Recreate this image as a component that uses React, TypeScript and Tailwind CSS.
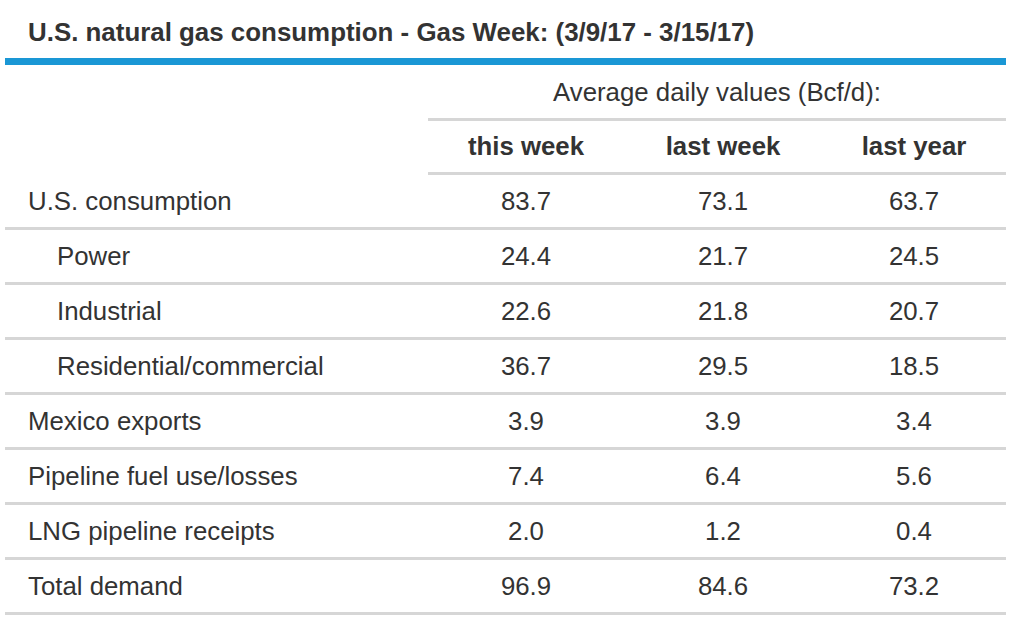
import React from 'react';

interface Row {
	label: string;
	indent?: boolean;
	values: [string, string, string];
}

const rows: Row[] = [
	{ label: 'U.S. consumption', values: ['83.7', '73.1', '63.7'] },
	{ label: 'Power', indent: true, values: ['24.4', '21.7', '24.5'] },
	{ label: 'Industrial', indent: true, values: ['22.6', '21.8', '20.7'] },
	{ label: 'Residential/commercial', indent: true, values: ['36.7', '29.5', '18.5'] },
	{ label: 'Mexico exports', values: ['3.9', '3.9', '3.4'] },
	{ label: 'Pipeline fuel use/losses', values: ['7.4', '6.4', '5.6'] },
	{ label: 'LNG pipeline receipts', values: ['2.0', '1.2', '0.4'] },
	{ label: 'Total demand', values: ['96.9', '84.6', '73.2'] }
];

const grid = 'grid grid-cols-[423px_196px_198px_184px]';

export default function App() {
	return (
		<div className="w-[1022px] h-[642px] bg-white text-[#333] font-['Liberation_Sans',Arial,sans-serif] text-[25.8px]">
			<div className="h-[58px] pl-[28px] pt-[17px] leading-[30px] font-bold text-[25.9px]">
				U.S. natural gas consumption - Gas Week: (3/9/17 - 3/15/17)
			</div>
			<div className="ml-[5px] w-[1001px] h-[7px] bg-[#1a97d5]" />

			<div className="ml-[5px] w-[1001px]">
				{/* header */}
				<div className={grid}>
					<div />
					<div className="col-span-3 h-[56px] flex items-center justify-center pt-[2px] border-b-[3px] border-[#d6d6d6]">
						Average daily values (Bcf/d):
					</div>
				</div>
				<div className={grid}>
					<div />
					{['this week', 'last week', 'last year'].map((h) => (
						<div
							key={h}
							className="h-[54px] flex items-center justify-center font-bold border-b-[3px] border-[#d6d6d6]"
						>
							{h}
						</div>
					))}
				</div>

				{rows.map((r) => (
					<div key={r.label} className={`${grid} h-[55px] border-b-[3px] border-[#d6d6d6]`}>
						<div className={`flex items-center ${r.indent ? 'pl-[52px]' : 'pl-[23px]'}`}>{r.label}</div>
						{r.values.map((v, i) => (
							<div key={i} className="flex items-center justify-center">
								{v}
							</div>
						))}
					</div>
				))}
			</div>
		</div>
	);
}
